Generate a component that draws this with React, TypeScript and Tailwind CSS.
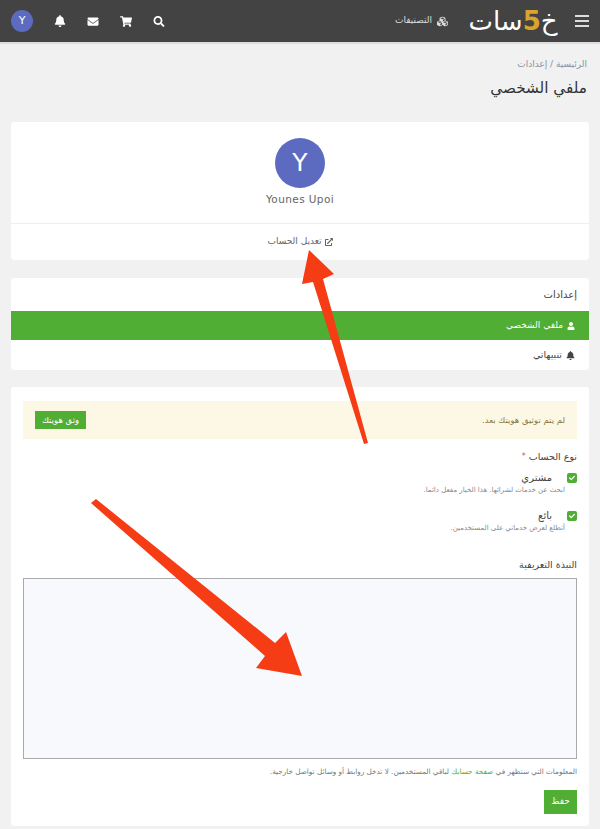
import { FaBell, FaCheck, FaCubes, FaEnvelope, FaExternalLinkAlt, FaSearch, FaShoppingCart, FaUser } from 'react-icons/fa'

const arabic = "font-['DejaVu_Sans','Noto_Sans',sans-serif]"

function CheckRow({ title, hint }: { title: string; hint: string }) {
  return (
    <div>
      <div className="flex items-center gap-[15px]">
        <span className="flex h-[10px] w-[10px] items-center justify-center rounded-[2px] bg-[#4fae33]">
          <FaCheck className="h-[6px] w-[6px] text-white" />
        </span>
        <span className="text-[10px] leading-[14px] text-[#444]">{title}</span>
      </div>
      <div className="pr-[12px] text-[7px] leading-[11px] text-[#888]">{hint}</div>
    </div>
  )
}

export default function App() {
  return (
    <div dir="rtl" className={`relative h-[829px] w-[600px] overflow-hidden bg-[#f1f1f1] ${arabic}`}>
      <header className="flex h-[44px] items-center border-b-2 border-[#ddd] bg-[#434343] pr-[11px] pl-[11px] text-white">
        <div className="flex w-[14px] flex-col gap-[3px]">
          <span className="h-[2px] bg-[#ddd]" />
          <span className="h-[2px] bg-[#ddd]" />
          <span className="h-[2px] bg-[#ddd]" />
        </div>
        <div className="mr-[17px] flex h-[30px] w-[90px] items-center justify-center text-[26px] leading-none">
          خ<span className="font-bold text-[#d9a32e]">5</span>سات
        </div>
        <div className="mr-[20px] flex items-center gap-[5px] text-[9px] text-[#ddd]">
          <FaCubes className="h-[11px] w-[11px]" />
          التصنيفات
        </div>
        <div className="mr-auto flex items-center gap-[21px]">
          <FaSearch className="h-[11px] w-[12px]" />
          <FaShoppingCart className="h-[11px] w-[12px]" />
          <FaEnvelope className="h-[11px] w-[12px]" />
          <FaBell className="h-[12px] w-[12px]" />
          <div className="flex h-[22px] w-[22px] items-center justify-center rounded-full bg-[#5c6bc0] text-[11px]">Y</div>
        </div>
      </header>

      <div className="px-[11px]">
        <div className="pt-[13px] pr-[2px] text-[9px] leading-[14px] text-[#8a93a3]">الرئيسية / إعدادات</div>
        <h1 className="mt-[5px] pr-[2px] text-[15.25px] leading-[24px] text-[#333]">ملفي الشخصي</h1>

        <section className="mt-[22px] h-[138px] rounded-[3px] bg-white">
          <div className="flex h-[102px] flex-col items-center border-b border-[#eee] pt-[16px]">
            <div className="flex h-[50px] w-[50px] items-center justify-center rounded-full bg-[#5c6bc0] text-[25px] text-white">Y</div>
            <div className="mt-[4px] text-[10.5px] leading-[14px] tracking-[0.4px] text-[#666]">Younes Upoi</div>
          </div>
          <div className="flex h-[36px] items-center justify-center gap-[3px] text-[9px] text-[#666]">
            <FaExternalLinkAlt className="h-[8px] w-[8px]" />
            تعديل الحساب
          </div>
        </section>

        <section className="mt-[18px] h-[92px] rounded-[3px] bg-white">
          <div className="flex h-[33px] items-center pr-[12px] text-[10px] text-[#444]">إعدادات</div>
          <div className="flex h-[29px] items-center gap-[4px] bg-[#4fae33] pr-[14px] text-[9px] text-white">
            <FaUser className="h-[8px] w-[8px]" />
            ملفي الشخصي
          </div>
          <div className="flex h-[30px] items-center gap-[4px] pr-[14px] text-[9.5px] text-[#444]">
            <FaBell className="h-[9px] w-[9px]" />
            تنبيهاتي
          </div>
        </section>

        <section className="mt-[17px] h-[439px] rounded-[3px] bg-white px-[12px] pt-[14px]">
          <div className="flex h-[38px] items-center justify-between bg-[#fdf7e5] px-[12px]">
            <span className="text-[8.5px] text-[#8a7a3c]">لم يتم توثيق هويتك بعد.</span>
            <button className="flex h-[18px] w-[51px] items-center justify-center bg-[#4fae33] text-[8.5px] text-white">وثق هويتك</button>
          </div>

          <div className="mt-[11px] flex items-center gap-[3px] text-[9.5px] leading-[14px] text-[#444]">
            نوع الحساب <span className="text-[8px] text-[#e0524a]">*</span>
          </div>
          <div className="mt-[7px]">
            <CheckRow title="مشتري" hint="ابحث عن خدمات لشرائها. هذا الخيار مفعل دائما." />
          </div>
          <div className="mt-[13px]">
            <CheckRow title="بائع" hint="أتطلع لعرض خدماتي على المستخدمين." />
          </div>

          <div className="mt-[24px] text-[9.5px] leading-[14px] text-[#444]">النبذة التعريفية</div>
          <textarea className="mt-[6px] block h-[181px] w-full resize-none border border-[#aaa] bg-[#f8f9fc]" />
          <p className="mt-[7px] text-[7.25px] leading-[11px] text-[#777]">
            المعلومات التي ستظهر في <span className="text-[#4fae33]">صفحة حسابك</span> لباقي المستخدمين. لا تدخل روابط أو وسائل تواصل خارجية.
          </p>
          <button className="mt-[13px] flex h-[24px] w-[33px] items-center justify-center bg-[#4fae33] text-[9px] text-white">حفظ</button>
        </section>
      </div>

      {/* red arrows drawn over the page */}
      <svg className="absolute top-0 left-0" width="600" height="829" viewBox="0 0 600 829">
        <polygon points="309,250 334,274 323,279 368,443 364,444 313,282 302,284" fill="#f53c14" />
        <polygon points="302,676 256,668 265,656 91,503 96,499 275,643 286,632" fill="#f53c14" />
      </svg>
    </div>
  )
}
